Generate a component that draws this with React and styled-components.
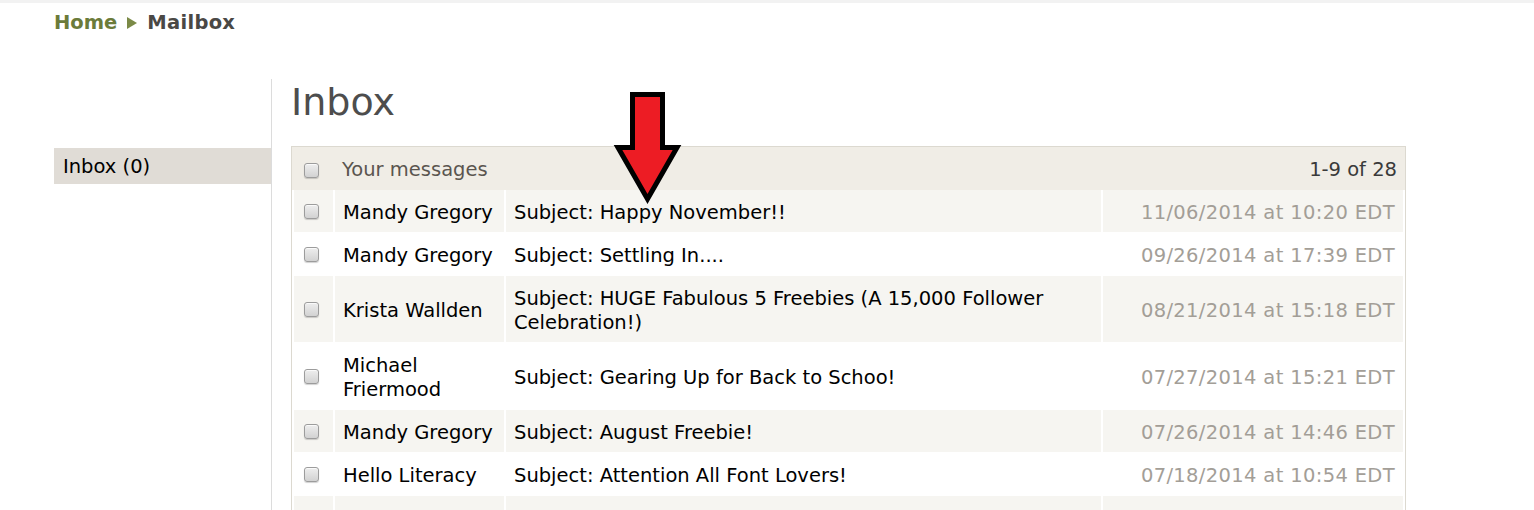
import styled, { createGlobalStyle } from 'styled-components';

const GlobalStyle = createGlobalStyle`
  * {
    box-sizing: border-box;
  }

  body {
    margin: 0;
    background: #fff;
    font-family: "DejaVu Sans", Verdana, sans-serif;
    color: #000;
  }
`;

const Page = styled.div`
  position: relative;
  border-top: 3px solid #f2f2f2;
  padding: 0 128px 0 54px;
  overflow: hidden;
`;

const Breadcrumb = styled.nav`
  display: flex;
  align-items: center;
  gap: 10px;
  padding-top: 8px;
  font-size: 19.5px;
  line-height: 24px;
  font-weight: bold;
`;

const Crumb = styled.a`
  color: ${p => (p.$current ? '#4a4845' : '#6b7b3a')};
  text-decoration: none;
  letter-spacing: ${p => (p.$current ? '0.3px' : '0')};
`;

const Layout = styled.div`
  display: flex;
  margin-top: 44px;
  min-height: 520px;
`;

const Sidebar = styled.aside`
  width: 218px;
  flex-shrink: 0;
  border-right: 1px solid #dcdcdc;
  padding-top: 69px;
`;

const NavItem = styled.a`
  display: block;
  padding: 7px 9px 5px;
  font-size: 19.5px;
  line-height: 24px;
  color: #000;
  text-decoration: none;
  background: ${p => (p.$active ? '#e0dcd6' : 'transparent')};
`;

const Main = styled.main`
  flex: 1;
  padding-left: 19px;
`;

const Title = styled.h1`
  margin: 1px 0 22px;
  font-size: 38px;
  line-height: 44px;
  font-weight: normal;
  color: #4d4d4d;
`;

const MessageBox = styled.div`
  border: 1px solid #dcd9d0;
`;

const BoxHeader = styled.div`
  display: flex;
  align-items: center;
  gap: 23px;
  padding: 11px 8px 8px 12px;
  background: #f0ede6;
  font-size: 19.5px;
  line-height: 24px;
`;

const HeaderLabel = styled.span`
  flex: 1;
  color: #5a554f;
`;

const Count = styled.span`
  color: #3a3a3a;
`;

const Table = styled.table`
  width: 100%;
  table-layout: fixed;
  border-collapse: separate;
  border-spacing: 2px 1px;
  margin-top: -1px;
  font-size: 19.5px;
  line-height: 24px;
`;

const Col = styled.col`
  width: ${p => p.$w}px;
`;

const Row = styled.tr`
  background: ${p => (p.$shaded ? '#f6f5f1' : '#fff')};
`;

const Cell = styled.td`
  padding: 11px 8px 7px;
  vertical-align: middle;
  color: ${p => (p.$muted ? '#a39e97' : '#000')};
  text-align: ${p => (p.$right ? 'right' : 'left')};
  letter-spacing: ${p => (p.$muted ? '0.35px' : '0')};
`;

const CheckCell = styled.td`
  padding: 9px 0 9px 10px;
  vertical-align: middle;
  line-height: 0;
`;

const Check = styled.input.attrs({ type: 'checkbox' })`
  appearance: none;
  margin: 0;
  flex-shrink: 0;
  width: 15px;
  height: 15px;
  border: 1px solid #9c9c9c;
  border-radius: 3px;
  background: linear-gradient(#eeeeee, #d2d2d2);
  box-shadow: inset 0 1px 0 #fafafa, 0 1px 1px rgba(0, 0, 0, 0.18);
  vertical-align: middle;
`;

const Pointer = styled.svg`
  position: absolute;
  left: 612px;
  top: 83px;
`;

const messages = [
  { from: 'Mandy Gregory', subject: 'Happy November!!', date: '11/06/2014 at 10:20 EDT' },
  { from: 'Mandy Gregory', subject: 'Settling In....', date: '09/26/2014 at 17:39 EDT' },
  { from: 'Krista Wallden', subject: 'HUGE Fabulous 5 Freebies (A 15,000 Follower Celebration!)', date: '08/21/2014 at 15:18 EDT' },
  { from: 'Michael Friermood', subject: 'Gearing Up for Back to Schoo!', date: '07/27/2014 at 15:21 EDT' },
  { from: 'Mandy Gregory', subject: 'August Freebie!', date: '07/26/2014 at 14:46 EDT' },
  { from: 'Hello Literacy', subject: 'Attention All Font Lovers!', date: '07/18/2014 at 10:54 EDT' },
  { from: 'Mandy Gregory', subject: 'July Freebie!', date: '07/01/2014 at 09:12 EDT' },
];

function App() {
  return (
    <Page>
      <GlobalStyle />
      <Breadcrumb>
        <Crumb href="#">Home</Crumb>
        <svg width="10" height="12" viewBox="0 0 10 12">
          <polygon points="0,0 10,6 0,12" fill="#7b8a47" />
        </svg>
        <Crumb $current>Mailbox</Crumb>
      </Breadcrumb>

      <Layout>
        <Sidebar>
          <NavItem href="#" $active>Inbox (0)</NavItem>
        </Sidebar>

        <Main>
          <Title>Inbox</Title>
          <MessageBox>
            <BoxHeader>
              <Check />
              <HeaderLabel>Your messages</HeaderLabel>
              <Count>1-9 of 28</Count>
            </BoxHeader>
            <Table>
              <colgroup>
                <Col $w={39} />
                <Col $w={169} />
                <Col $w={595} />
                <Col $w={300} />
              </colgroup>
              <tbody>
                {messages.map((m, i) => (
                  <Row key={i} $shaded={i % 2 === 0}>
                    <CheckCell><Check /></CheckCell>
                    <Cell>{m.from}</Cell>
                    <Cell>Subject: {m.subject}</Cell>
                    <Cell $muted $right>{m.date}</Cell>
                  </Row>
                ))}
              </tbody>
            </Table>
          </MessageBox>
        </Main>
      </Layout>

      <Pointer width="72" height="124" viewBox="0 0 72 124">
        <path
          d="M20.5 8.5 H50.5 V61.5 H65 L35.5 113 L6 61.5 H20.5 Z"
          fill="#ed1c24"
          stroke="#000"
          strokeWidth="5"
          strokeLinejoin="miter"
          strokeMiterlimit="4"
        />
      </Pointer>
    </Page>
  );
}

export default App;
